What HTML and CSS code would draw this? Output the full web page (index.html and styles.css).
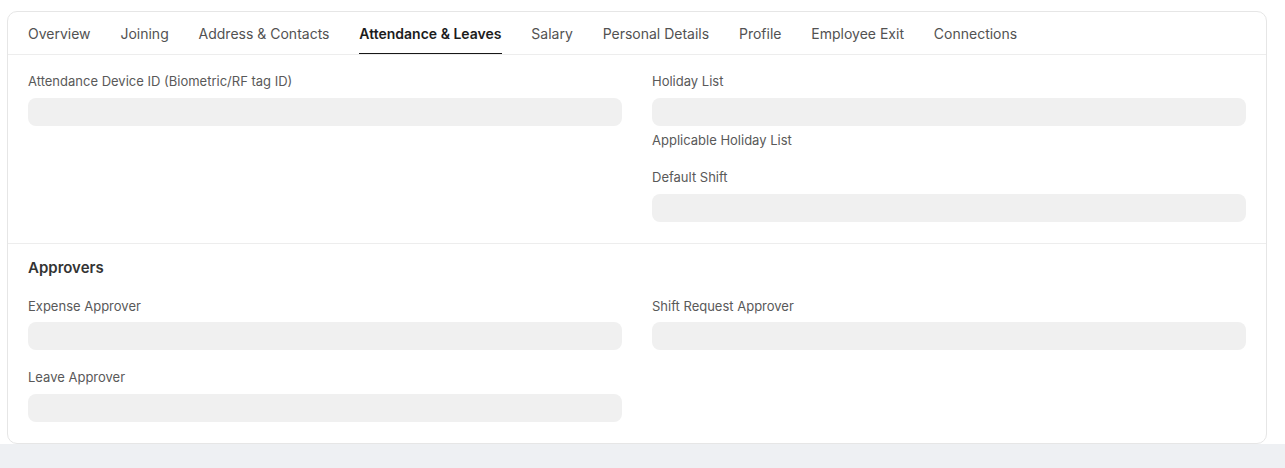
FILE: index.html
```html
<!DOCTYPE html>
<html lang="en">
<head>
<meta charset="utf-8">
<title>Employee</title>
<link rel="stylesheet" href="styles.css">
</head>
<body>
<div class="page">
  <div class="card">
    <nav class="tabs">
      <span class="tab">Overview</span>
      <span class="tab">Joining</span>
      <span class="tab">Address &amp; Contacts</span>
      <span class="tab active">Attendance &amp; Leaves</span>
      <span class="tab">Salary</span>
      <span class="tab">Personal Details</span>
      <span class="tab">Profile</span>
      <span class="tab">Employee Exit</span>
      <span class="tab">Connections</span>
    </nav>
    <section class="section first">
      <div class="grid">
        <div class="col">
          <div class="field">
            <div class="label">Attendance Device ID (Biometric/RF tag ID)</div>
            <div class="input"></div>
          </div>
        </div>
        <div class="col">
          <div class="field">
            <div class="label">Holiday List</div>
            <div class="input"></div>
            <div class="desc">Applicable Holiday List</div>
          </div>
          <div class="field">
            <div class="label">Default Shift</div>
            <div class="input"></div>
          </div>
        </div>
      </div>
    </section>
    <section class="section second">
      <h3 class="section-title">Approvers</h3>
      <div class="grid">
        <div class="col">
          <div class="field">
            <div class="label">Expense Approver</div>
            <div class="input"></div>
          </div>
          <div class="field">
            <div class="label">Leave Approver</div>
            <div class="input"></div>
          </div>
        </div>
        <div class="col">
          <div class="field">
            <div class="label">Shift Request Approver</div>
            <div class="input"></div>
          </div>
        </div>
      </div>
    </section>
  </div>
</div>
</body>
</html>
```

FILE: styles.css
```css
html, body {
  margin: 0;
  padding: 0;
}
body {
  background: #eef0f3;
  font-family: Inter, "Noto Sans", sans-serif;
  color: #171717;
  min-height: 468px;
}
.page {
  background: #ffffff;
  padding: 11px 18px 0 7px;
}
.card {
  border: 1px solid #e6e6e6;
  border-radius: 10px;
  background: #ffffff;
}
.tabs {
  display: flex;
  gap: 29.85px;
  padding: 0 20px;
  height: 42px;
  border-bottom: 1px solid #ededed;
  align-items: stretch;
}
.tab {
  display: flex;
  align-items: center;
  font-size: 14px;
  color: #525252;
  white-space: nowrap;
}
.tab.active {
  color: #1c1c1c;
  font-weight: 600;
  box-shadow: inset 0 -1px 0 #171717;
}
.section {
  padding: 0 20px 2px 20px;
}
.section.first {
  padding-top: 18px;
  border-bottom: 1px solid #ededed;
}
.section.second {
  padding-top: 14px;
}
.section-title {
  margin: 0 0 20px 0;
  font-size: 15px;
  line-height: 20px;
  font-weight: 600;
  color: #333333;
}
.grid {
  display: grid;
  grid-template-columns: 1fr 1fr;
  column-gap: 30px;
}
.field {
  margin-bottom: 19px;
}
.label {
  font-size: 13px;
  line-height: 16px;
  color: #595959;
  margin-bottom: 9px;
}
.second .field:first-child .label {
  margin-bottom: 8px;
}
.input {
  height: 28px;
  border-radius: 8px;
  background: #f0f0f0;
}
.desc {
  font-size: 13px;
  line-height: 16px;
  color: #595959;
  margin-top: 6px;
  padding-bottom: 2px;
}
```
